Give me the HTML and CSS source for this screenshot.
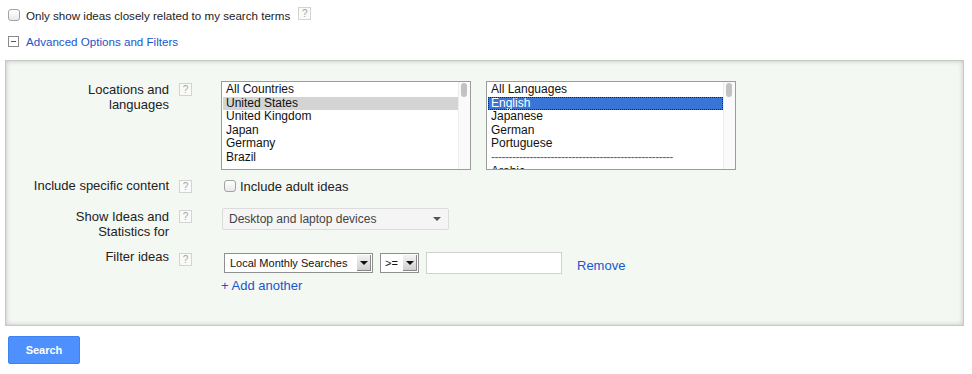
FILE: index.html
```html
<!DOCTYPE html>
<html lang="en">
<head>
    <meta charset="UTF-8">
    <title>Keyword Tool | Advanced Options</title>
    <link rel="stylesheet" href="styles.css">
</head>
<body>

    <!-- Top options -->
    <div class="top">
        <div class="check-row">
            <span class="checkbox"></span>
            <span class="check-label">Only show ideas closely related to my search terms</span>
            <span class="help">?</span>
        </div>
        <div class="toggle-row">
            <span class="minus-box"></span>
            <a href="#" class="link">Advanced Options and Filters</a>
        </div>
    </div>

    <!-- Advanced panel -->
    <div class="panel">
        <div class="row row-locations">
            <div class="label">Locations and<br>languages</div>
            <div class="help-cell"><span class="help">?</span></div>
            <div class="content lists">
                <div class="listbox">
                    <ul class="list">
                        <li>All Countries</li>
                        <li class="sel-grey">United States</li>
                        <li>United Kingdom</li>
                        <li>Japan</li>
                        <li>Germany</li>
                        <li>Brazil</li>
                    </ul>
                    <div class="scroll"><span class="thumb"></span></div>
                </div>
                <div class="listbox">
                    <ul class="list">
                        <li>All Languages</li>
                        <li class="sel-blue">English</li>
                        <li>Japanese</li>
                        <li>German</li>
                        <li>Portuguese</li>
                        <li class="divider">----------------------------------------------------</li>
                        <li>Arabic</li>
                    </ul>
                    <div class="scroll"><span class="thumb"></span></div>
                </div>
            </div>
        </div>

        <div class="row row-content">
            <div class="label">Include specific content</div>
            <div class="help-cell"><span class="help">?</span></div>
            <div class="content">
                <div class="check-row adult">
                    <span class="checkbox"></span>
                    <span class="check-label">Include adult ideas</span>
                </div>
            </div>
        </div>

        <div class="row row-devices">
            <div class="label">Show Ideas and<br>Statistics for</div>
            <div class="help-cell"><span class="help">?</span></div>
            <div class="content">
                <div class="dropdown">
                    <span>Desktop and laptop devices</span>
                    <span class="caret"></span>
                </div>
            </div>
        </div>

        <div class="row row-filter">
            <div class="label">Filter ideas</div>
            <div class="help-cell"><span class="help">?</span></div>
            <div class="content">
                <div class="filter-line">
                    <div class="mac-select wide">
                        <span>Local Monthly Searches</span>
                        <span class="arrow-btn"></span>
                    </div>
                    <div class="mac-select small">
                        <span>&gt;=</span>
                        <span class="arrow-btn"></span>
                    </div>
                    <input type="text" class="value-input">
                    <a href="#" class="link remove">Remove</a>
                </div>
                <a href="#" class="link add">+ Add another</a>
            </div>
        </div>
    </div>

    <button class="btn">Search</button>

</body>
</html>
```

FILE: styles.css
```css
* {
    margin: 0;
    padding: 0;
    box-sizing: border-box;
}
body {
    background: #fff;
    font-family: 'Liberation Sans', Arial, sans-serif;
    font-size: 13px;
    color: #222;
}
.link {
    color: #1a55cc;
    text-decoration: none;
}
.top {
    padding: 7px 8px 0;
    font-size: 11.6px;
}
.check-row {
    display: flex;
    align-items: center;
    height: 16px;
}
.checkbox {
    width: 12px;
    height: 12px;
    border: 1px solid #a3a3a3;
    border-radius: 3px;
    background: linear-gradient(#ffffff, #e9e9e9);
    flex-shrink: 0;
}
.check-label {
    margin-left: 6px;
    white-space: nowrap;
}
.help {
    display: inline-block;
    width: 13px;
    height: 13px;
    border: 1px solid #d3d3d3;
    background: #fafafa;
    color: #a5a5a5;
    font-size: 10px;
    line-height: 11px;
    text-align: center;
}
.check-row .help {
    margin-left: 8px;
    margin-top: -3px;
}
.toggle-row {
    display: flex;
    align-items: center;
    height: 16px;
    margin-top: 10px;
}
.minus-box {
    position: relative;
    width: 11px;
    height: 11px;
    border: 1px solid #8a8a8a;
    margin-right: 7px;
    background: #fff;
}
.minus-box::after {
    content: "";
    position: absolute;
    left: 2px;
    right: 2px;
    top: 4px;
    height: 1px;
    background: #555;
}

/* panel */
.panel {
    margin: 11px 0 0 5px;
    width: 959px;
    height: 266px;
    border: 1px solid #c5cbc4;
    background: #f4f8f3;
    box-shadow: inset 0 0 5px rgba(0, 0, 0, 0.22);
    padding-top: 20px;
}
.row {
    display: grid;
    grid-template-columns: 163px 52px 1fr;
}
.label {
    text-align: right;
    line-height: 15px;
}
.help-cell {
    padding-left: 10px;
}
.row-locations .label {
    margin-top: 1px;
}
.row-locations .help {
    margin-top: 1px;
}
.lists {
    display: flex;
    gap: 15px;
}
.listbox {
    display: flex;
    width: 250px;
    height: 89px;
    border: 1px solid #9c9c9c;
    background: #fff;
    overflow: hidden;
}
.list {
    list-style: none;
    flex: 1;
    padding: 1px 0 0 1px;
    font-size: 12px;
    line-height: 13.6px;
    color: #111;
}
.list li {
    padding-left: 3px;
    white-space: nowrap;
    overflow: hidden;
}
.list .sel-grey {
    background: #d4d4d4;
}
.list .sel-blue {
    background: #3875d7;
    color: #fff;
    outline: 1px dotted #222;
    outline-offset: -1px;
}
.list .divider {
    color: #666;
    letter-spacing: -0.5px;
}
.scroll {
    width: 12px;
    border-left: 1px solid #ececec;
    background: #fafafa;
    padding: 1px 0 0 2px;
}
.thumb {
    display: block;
    width: 6px;
    height: 14px;
    border-radius: 3px;
    background: #c2c2c2;
}

.row-content {
    margin-top: 8px;
}
.row-content .label {
    line-height: 16px;
}
.row-content .help {
    margin-top: 1px;
}
.adult {
    margin-left: 3px;
}
.adult .check-label {
    margin-left: 4px;
}

.row-devices {
    margin-top: 14px;
}
.row-devices .label {
    margin-top: 1px;
}
.row-devices .help {
    margin-top: 1px;
}
.dropdown {
    display: flex;
    align-items: center;
    justify-content: space-between;
    width: 227px;
    height: 22px;
    margin-left: 1px;
    padding: 0 7px 0 6px;
    border: 1px solid #dcdcdc;
    border-radius: 2px;
    background: #f5f5f5;
    font-size: 12px;
    color: #444;
}
.caret {
    width: 0;
    height: 0;
    border-left: 4px solid transparent;
    border-right: 4px solid transparent;
    border-top: 4px solid #555;
}

.row-filter {
    margin-top: 12px;
}
.row-filter .label {
    margin-top: -2px;
}
.row-filter .help {
    margin-top: -3px;
}
.filter-line {
    display: flex;
    align-items: center;
    height: 24px;
    margin-left: 3px;
}
.mac-select {
    display: flex;
    align-items: center;
    justify-content: space-between;
    height: 20px;
    border: 1px solid #8f8f8f;
    background: #fff;
    font-size: 11px;
    color: #111;
    padding-left: 5px;
    white-space: nowrap;
}
.mac-select.wide {
    width: 149px;
}
.mac-select.small {
    width: 39px;
    margin-left: 7px;
    padding-left: 4px;
}
.arrow-btn {
    position: relative;
    flex-shrink: 0;
    width: 14px;
    height: 16px;
    margin-right: 1px;
    background: linear-gradient(#f4f4f4, #cfcfcf);
    border-right: 1px solid #888;
    border-bottom: 1px solid #888;
}
.arrow-btn::after {
    content: "";
    position: absolute;
    left: 3px;
    top: 6px;
    border-left: 4px solid transparent;
    border-right: 4px solid transparent;
    border-top: 4px solid #111;
}
.value-input {
    width: 136px;
    height: 22px;
    margin-left: 7px;
    border: 1px solid #d0d0d0;
    background: #fff;
}
.remove {
    margin-left: 15px;
    margin-top: 4px;
}
.add {
    display: inline-block;
    margin-top: 3px;
    line-height: 16px;
}

.btn {
    margin: 10px 0 0 8px;
    width: 72px;
    height: 28px;
    background: #4d90fe;
    border: 1px solid #3f83f2;
    border-radius: 2px;
    color: #fff;
    font-family: 'Liberation Sans', Arial, sans-serif;
    font-size: 11px;
    font-weight: bold;
    cursor: pointer;
}
```
